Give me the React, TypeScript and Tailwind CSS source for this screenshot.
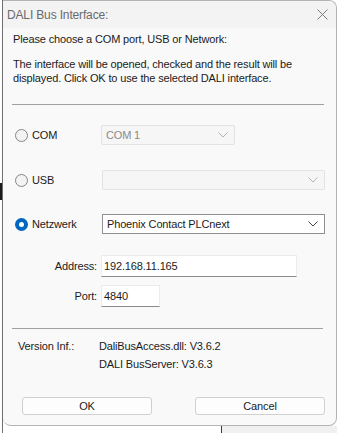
import React from "react";

const Chevron = ({ color }: { color: string }) => (
  <svg width="10" height="6" viewBox="0 0 10 6" fill="none">
    <polyline points="0.5,0.5 5,5 9.5,0.5" stroke={color} strokeWidth="1" />
  </svg>
);

const Radio = ({ checked }: { checked?: boolean }) =>
  checked ? (
    <div className="w-[13px] h-[13px] rounded-full bg-[#0067c0] flex items-center justify-center">
      <div className="w-[5px] h-[5px] rounded-full bg-white" />
    </div>
  ) : (
    <div className="w-[13px] h-[13px] rounded-full border border-[#858585] bg-[#f3f3f3]" />
  );

const App = () => {
  return (
    <div
      className="w-[339px] h-[433px] bg-white flex text-[11px] leading-[14px] text-[#1b1b1b] tracking-[-0.15px] overflow-hidden"
      style={{ fontFamily: '"Liberation Sans", Arial, sans-serif' }}
    >
      {/* stuff behind the dialog on the left */}
      <div className="w-[3px] h-full flex">
        <div className="w-[2px] flex flex-col">
          <div className="h-[183px]" />
          <div className="h-[17px] border-y-2 border-r-2 border-[#1a1a1a]" />
        </div>
        <div className="w-px bg-[#6f6f6f]" />
      </div>

      <div className="w-[334px] flex flex-col">
        {/* dialog window */}
        <div className="h-[426px] border border-l-0 border-[#b4b4b4] rounded-tr-[8px] rounded-br-[8px] rounded-bl-[8px] overflow-hidden flex flex-col bg-[#f9f9f9]">
          <div className="h-[27px] bg-[#f3f3f3] flex items-center justify-between pl-[4px] pr-[8px] text-[12px] text-[#6a6a6a]">
            <span>DALI Bus Interface:</span>
            <svg width="11" height="11" viewBox="0 0 11 11">
              <line x1="0.5" y1="0.5" x2="10.5" y2="10.5" stroke="#7a7a7a" strokeWidth="1" />
              <line x1="10.5" y1="0.5" x2="0.5" y2="10.5" stroke="#7a7a7a" strokeWidth="1" />
            </svg>
          </div>

          <div className="flex-1 pl-[9px] flex flex-col">
            <div className="mt-[4px] pl-px">Please choose a COM port, USB or Network:</div>
            <div className="mt-[11px] pl-px">
              The interface will be opened, checked and the result will be
              <br />
              displayed. Click OK to use the selected DALI interface.
            </div>
            <div className="mt-[19px] w-[312px] h-px bg-[#a0a0a0]" />

            {/* COM */}
            <div className="mt-[20px] h-[20px] flex items-center">
              <div className="w-[89px] flex items-center gap-[4px] pl-[3px]">
                <Radio />
                <span>COM</span>
              </div>
              <div className="w-[134px] h-[20px] border border-[#e3e3e3] rounded-[2px] bg-[#f6f6f6] flex items-center justify-between pl-[4px] pr-[6px] text-[#8a8a8a]">
                <span>COM 1</span>
                <Chevron color="#b5b5b5" />
              </div>
            </div>

            {/* USB */}
            <div className="mt-[25px] h-[20px] flex items-center">
              <div className="w-[90px] flex items-center gap-[4px] pl-[3px]">
                <Radio />
                <span>USB</span>
              </div>
              <div className="w-[223px] h-[20px] border border-[#e3e3e3] rounded-[2px] bg-[#f6f6f6] flex items-center justify-end pr-[6px]">
                <Chevron color="#b5b5b5" />
              </div>
            </div>

            {/* Netzwerk */}
            <div className="mt-[24px] h-[20px] flex items-center">
              <div className="w-[90px] flex items-center gap-[4px] pl-[3px]">
                <Radio checked />
                <span>Netzwerk</span>
              </div>
              <div className="w-[223px] h-[20px] border border-[#8f8f8f] bg-white flex items-center justify-between pl-[4px] pr-[6px]">
                <span>Phoenix Contact PLCnext</span>
                <Chevron color="#444444" />
              </div>
            </div>

            {/* Address / Port */}
            <div className="mt-[21px] h-[22px] flex items-center">
              <div className="w-[85px] text-right">Address:</div>
              <div className="ml-[4px] w-[196px] h-[22px] bg-white border border-[#ececec] border-b-[#8a8a8a] flex items-center pl-[2px]">
                192.168.11.165
              </div>
            </div>
            <div className="mt-[8px] h-[22px] flex items-center">
              <div className="w-[85px] text-right">Port:</div>
              <div className="ml-[4px] w-[59px] h-[22px] bg-white border border-[#ececec] border-b-[#8a8a8a] flex items-center pl-[2px]">
                4840
              </div>
            </div>

            <div className="mt-[21px] w-[311px] h-px bg-[#a0a0a0]" />

            {/* version */}
            <div className="mt-[8px] flex leading-[18px]">
              <div className="w-[87px] pl-[6px]">Version Inf.:</div>
              <div className="flex flex-col">
                <span>DaliBusAccess.dll: V3.6.2</span>
                <span>DALI BusServer: V3.6.3</span>
              </div>
            </div>

            {/* buttons */}
            <div className="mt-[24px] flex gap-[43px] pl-[10px]">
              <button className="w-[130px] h-[18px] bg-[#fdfdfd] border border-[#d0d0d0] rounded-[3px] text-[11px] leading-[14px]">
                OK
              </button>
              <button className="w-[130px] h-[18px] bg-[#fdfdfd] border border-[#d0d0d0] rounded-[3px] text-[11px] leading-[14px]">
                Cancel
              </button>
            </div>
          </div>
        </div>

        {/* below the dialog */}
        <div className="flex-1 flex">
          <div className="w-[218px]" />
          <div className="w-px bg-[#3c3c3c]" />
          <div className="flex-1 bg-[#f0f0f0]" />
        </div>
      </div>
    </div>
  );
};

export default App;
